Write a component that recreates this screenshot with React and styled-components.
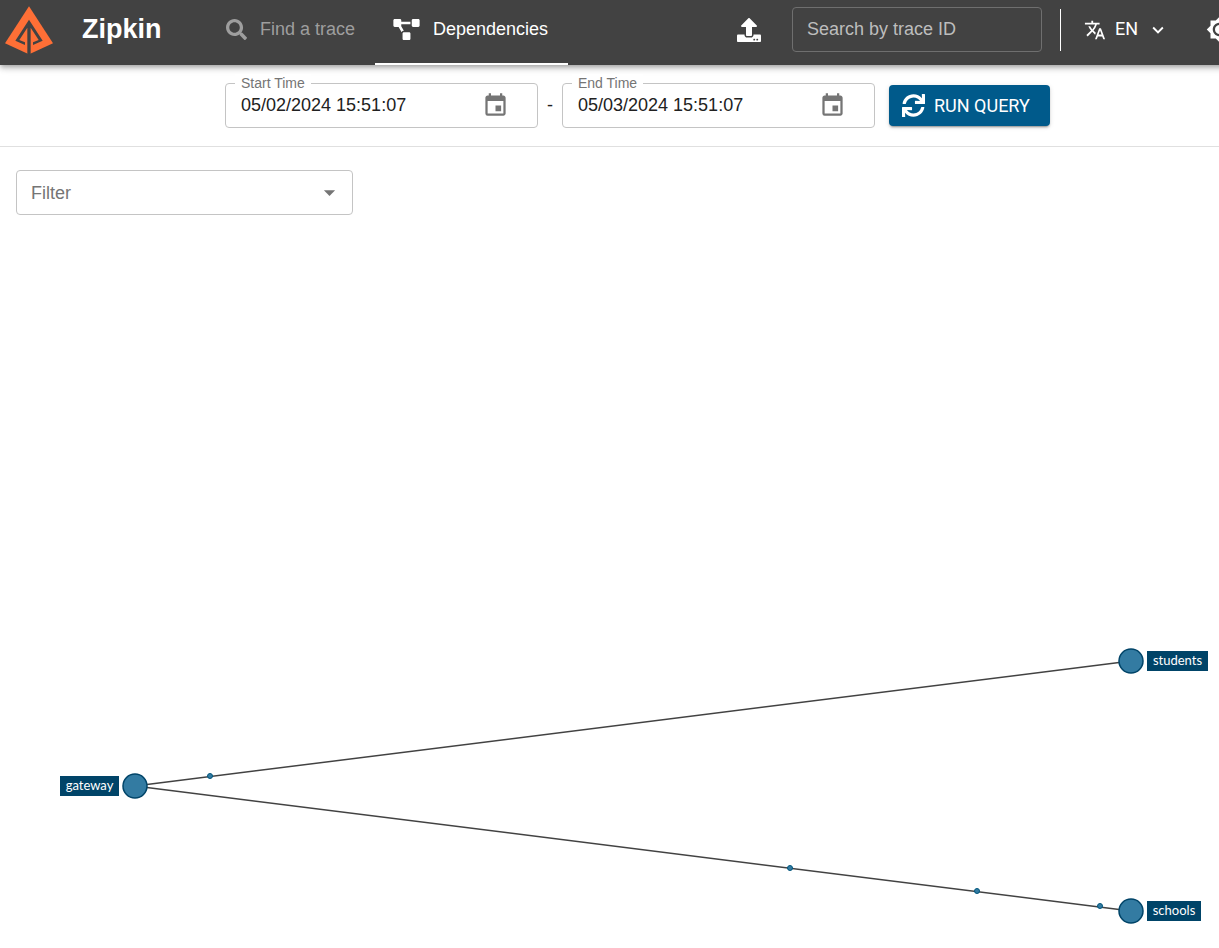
import { useState } from "react";
import styled, { createGlobalStyle } from "styled-components";
import { FaProjectDiagram, FaSearch, FaSync, FaUpload } from "react-icons/fa";
import {
  MdArrowDropDown,
  MdBrightness7,
  MdEvent,
  MdKeyboardArrowDown,
  MdTranslate,
} from "react-icons/md";

const GlobalStyle = createGlobalStyle`
  * {
    box-sizing: border-box;
  }

  body {
    margin: 0;
    background-color: #fff;
    color: #212121;
    font-family: "Liberation Sans", Arial, sans-serif;
    font-size: 18px;
  }

  button, input, select {
    font: inherit;
    color: inherit;
  }
`;

const Page = styled.div`
  overflow: hidden;
`;

const Content = styled.div`
  min-width: 1275px;
`;

const Header = styled.header`
  position: relative;
  display: flex;
  height: 65px;
  background-color: #424242;
  color: #fff;
  box-shadow: 0 2px 4px -1px rgba(0, 0, 0, 0.2), 0 4px 5px rgba(0, 0, 0, 0.14),
    0 1px 10px rgba(0, 0, 0, 0.12);
`;

const Brand = styled.div`
  display: flex;
  align-items: center;
  gap: 29px;
  width: 208px;
  padding: 0 0 6px 5px;
`;

const Title = styled.h1`
  margin: 0;
  padding-bottom: 2px;
  font-size: 27px;
  line-height: 32px;
  font-weight: 700;
`;

const Tabs = styled.nav`
  display: flex;
`;

const Tab = styled.a`
  display: flex;
  align-items: center;
  gap: 13px;
  min-width: ${(props) => (props.$wideIcon ? 193 : 167)}px;
  padding: 0 18px 4px;
  border-bottom: 2px solid ${(props) => (props.$active ? "#fff" : "transparent")};
  color: ${(props) => (props.$active ? "#fff" : "#9e9e9e")};
  text-decoration: none;
  white-space: nowrap;

  svg {
    height: 21px;
    width: ${(props) => (props.$wideIcon ? 27 : 21)}px;
  }
`;

const Tools = styled.div`
  display: flex;
  align-items: center;
  margin-left: auto;
  padding: 0 34px 6px 0;
`;

const IconButton = styled.button`
  display: flex;
  align-items: center;
  justify-content: center;
  width: 44px;
  height: 44px;
  padding: 0;
  border: none;
  background-color: transparent;
  color: ${(props) => props.$color || "inherit"};
  cursor: pointer;
`;

const TraceInput = styled.input`
  width: 250px;
  height: 45px;
  margin: 0 18px 0 21px;
  padding: 0 14px;
  border: 1px solid #6f6f6f;
  border-radius: 4px;
  background-color: transparent;

  &::placeholder {
    color: #bdbdbd;
    opacity: 1;
  }
`;

const Divider = styled.div`
  width: 1px;
  height: 42px;
  background-color: #fff;
`;

const LanguageButton = styled.button`
  display: flex;
  align-items: center;
  margin-right: 20px;
  padding: 0 8px 0 23px;
  border: none;
  background-color: transparent;
  font-family: Roboto, sans-serif;
  line-height: 24px;
  cursor: pointer;

  span {
    margin: 0 9px;
    padding-bottom: 2px;
  }
`;

const QueryForm = styled.form`
  display: flex;
  align-items: center;
  justify-content: center;
  height: 82px;
  border-bottom: 1px solid #e0e0e0;
`;

const DateField = styled.div`
  position: relative;
  display: flex;
  align-items: center;
  width: 313px;
  height: 45px;
  padding: 0 20px 0 15px;
  border: 1px solid #c4c4c4;
  border-radius: 4px;

  label {
    position: absolute;
    top: -10px;
    left: 9px;
    padding: 0 6px;
    background-color: #fff;
    color: #757575;
    font-size: 14px;
    line-height: 18px;
  }

  input {
    flex: 1;
    min-width: 0;
    padding: 0;
    border: none;
    outline: none;
    background-color: transparent;
  }
`;

const Dash = styled.span`
  width: 24px;
  text-align: center;
`;

const RunButton = styled.button`
  display: flex;
  align-items: center;
  gap: 9px;
  width: 161px;
  height: 41px;
  margin-left: 14px;
  padding: 0 13px;
  border: none;
  border-radius: 4px;
  background-color: #005a8b;
  color: #fff;
  font-family: Roboto, sans-serif;
  white-space: nowrap;
  box-shadow: 0 3px 1px -2px rgba(0, 0, 0, 0.2), 0 2px 2px rgba(0, 0, 0, 0.14),
    0 1px 5px rgba(0, 0, 0, 0.12);
  cursor: pointer;
`;

const FilterField = styled.div`
  display: grid;
  align-items: center;
  width: 337px;
  height: 45px;
  margin: 23px 16px 0;
  color: #757575;

  select,
  svg {
    grid-area: 1 / 1;
  }

  select {
    width: 100%;
    height: 100%;
    padding: 0 14px;
    border: 1px solid #c4c4c4;
    border-radius: 4px;
    background-color: transparent;
    appearance: none;
  }

  svg {
    justify-self: end;
    margin-right: 10px;
    pointer-events: none;
  }
`;

const Graph = styled.svg`
  display: block;
  width: 100%;
  font-family: Lato, sans-serif;
  font-size: 13px;

  line {
    stroke: #424242;
    stroke-width: 1.5;
  }

  rect {
    fill: #004468;
  }

  text {
    fill: #fff;
    text-anchor: middle;
  }
`;

const Node = styled.circle`
  fill: #337ba2;
  stroke: #004468;
  stroke-width: 1.5;
`;

const Request = styled.circle`
  fill: #337ba2;
  stroke: #00557c;
`;

const nodes = [
  { name: "gateway", x: 135, y: 571, labelX: 60, labelWidth: 59 },
  { name: "students", x: 1131, y: 446, labelX: 1147, labelWidth: 61 },
  { name: "schools", x: 1131, y: 696, labelX: 1147, labelWidth: 54 },
];

const requests = [
  { x: 210, y: 561 },
  { x: 790, y: 653 },
  { x: 977, y: 676 },
  { x: 1100, y: 691 },
];

const Logo = () => (
  <svg width="48" height="48" viewBox="0 0 144 144" aria-hidden="true">
    <path fill="#fe6f36" d="M72 1 144 112 79 142H65L0 112Z" />
    <path
      fill="#424242"
      d="M72 41 31 104 60 117V109L43 102 67 65V142H69V54H75V142H77V65L101 102 84 109V117L113 104Z"
    />
    <path fill="#424242" d="M69 50H75V144H69Z" />
  </svg>
);

const DateInput = ({ id, label, value, onChange }) => (
  <DateField>
    <label htmlFor={id}>{label}</label>
    <input id={id} type="text" value={value} onChange={(e) => onChange(e.target.value)} />
    <IconButton type="button" $color="#757575" aria-label={`Choose ${label}`}>
      <MdEvent size={27} />
    </IconButton>
  </DateField>
);

const App = () => {
  const [startTime, setStartTime] = useState("05/02/2024 15:51:07");
  const [endTime, setEndTime] = useState("05/03/2024 15:51:07");
  const [traceId, setTraceId] = useState("");

  return (
    <Page>
      <GlobalStyle />
      <Content>
        <Header>
          <Brand>
            <Logo />
            <Title>Zipkin</Title>
          </Brand>
          <Tabs>
            <Tab href="#trace">
              <FaSearch />
              Find a trace
            </Tab>
            <Tab href="#dependencies" $active $wideIcon>
              <FaProjectDiagram />
              Dependencies
            </Tab>
          </Tabs>
          <Tools>
            <IconButton type="button" aria-label="Upload JSON">
              <FaUpload size={24} />
            </IconButton>
            <TraceInput
              type="text"
              aria-label="Search by trace ID"
              placeholder="Search by trace ID"
              value={traceId}
              onChange={(e) => setTraceId(e.target.value)}
            />
            <Divider />
            <LanguageButton type="button">
              <MdTranslate size={22} />
              <span>EN</span>
              <MdKeyboardArrowDown size={22} />
            </LanguageButton>
            <IconButton type="button" aria-label="Switch theme">
              <MdBrightness7 size={27} />
            </IconButton>
          </Tools>
        </Header>

        <QueryForm onSubmit={(e) => e.preventDefault()}>
          <DateInput id="start" label="Start Time" value={startTime} onChange={setStartTime} />
          <Dash>-</Dash>
          <DateInput id="end" label="End Time" value={endTime} onChange={setEndTime} />
          <RunButton type="submit">
            <FaSync size={23} />
            RUN QUERY
          </RunButton>
        </QueryForm>

        <FilterField>
          <select aria-label="Filter" defaultValue="">
            <option value="">Filter</option>
            {nodes.map((node) => (
              <option key={node.name}>{node.name}</option>
            ))}
          </select>
          <MdArrowDropDown size={27} />
        </FilterField>

        <Graph viewBox="0 0 1275 733">
          <line x1="135" y1="571" x2="1131" y2="446" />
          <line x1="135" y1="571" x2="1131" y2="696" />
          {requests.map((request) => (
            <Request key={request.x} cx={request.x} cy={request.y} r="2.5" />
          ))}
          {nodes.map((node) => (
            <g key={node.name}>
              <Node cx={node.x} cy={node.y} r="12" />
              <rect x={node.labelX} y={node.y - 10} width={node.labelWidth} height="20" />
              <text x={node.labelX + node.labelWidth / 2} y={node.y + 4}>
                {node.name}
              </text>
            </g>
          ))}
        </Graph>
      </Content>
    </Page>
  );
};

export default App;
